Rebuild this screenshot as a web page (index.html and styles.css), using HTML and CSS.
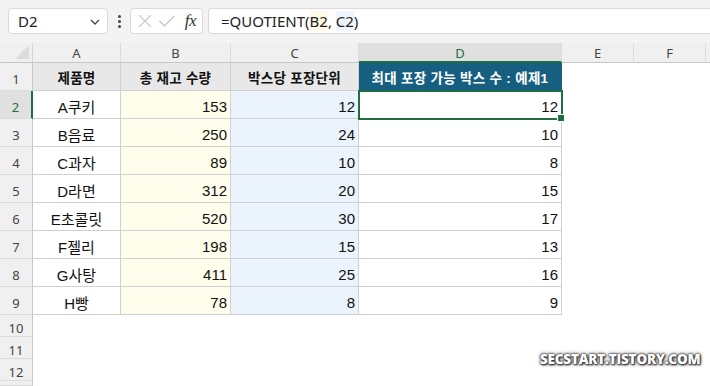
FILE: index.html
```html
<!DOCTYPE html>
<html lang="ko">
<head>
<meta charset="utf-8">
<link rel="stylesheet" href="styles.css">
</head>
<body>
<div class="app">
  <div class="toolbar">
    <div class="namebox"><span>D2</span>
      <svg class="chev" width="10" height="6" viewBox="0 0 10 6"><path d="M1 1l4 4 4-4" fill="none" stroke="#444" stroke-width="1.3"/></svg>
    </div>
    <div class="dots"><i></i><i></i><i></i></div>
    <div class="fxbox">
      <svg width="16" height="16" viewBox="0 0 16 16"><path d="M2 2l12 12M14 2L2 14" stroke="#c4c4c4" stroke-width="1.2" fill="none"/></svg>
      <svg width="18" height="16" viewBox="0 0 18 16"><path d="M1.5 8l5 5L16.5 3" stroke="#c4c4c4" stroke-width="1.2" fill="none"/></svg>
      <span class="fx">fx</span>
    </div>
    <div class="formula"><span class="ftext">=QUOTIENT(<span class="refb">B2</span>, <span class="refc">C2</span>)</span></div>
  </div>
  <div class="sheet">
    <div class="corner"><svg width="14" height="14" viewBox="0 0 14 14"><path d="M14 0V14H0Z" fill="#dcdcdc"/></svg></div>
    <div class="ch">A</div><div class="ch">B</div><div class="ch">C</div><div class="ch active">D</div><div class="ch">E</div><div class="ch">F</div><div class="ch last"></div>

    <div class="rh">1</div>
    <div class="c hd">제품명</div><div class="c hd">총 재고 수량</div><div class="c hd">박스당 포장단위</div><div class="c hd dark">최대 포장 가능 박스 수 : 예제1</div><div class="e"></div><div class="e"></div><div class="e"></div>

    <div class="rh active">2</div>
    <div class="c ctr">A쿠키</div><div class="c yel num">153</div><div class="c blu num">12</div><div class="c num sel">12<span class="handle"></span></div><div class="e"></div><div class="e"></div><div class="e"></div>

    <div class="rh">3</div>
    <div class="c ctr">B음료</div><div class="c yel num">250</div><div class="c blu num">24</div><div class="c num">10</div><div class="e"></div><div class="e"></div><div class="e"></div>

    <div class="rh">4</div>
    <div class="c ctr">C과자</div><div class="c yel num">89</div><div class="c blu num">10</div><div class="c num">8</div><div class="e"></div><div class="e"></div><div class="e"></div>

    <div class="rh">5</div>
    <div class="c ctr">D라면</div><div class="c yel num">312</div><div class="c blu num">20</div><div class="c num">15</div><div class="e"></div><div class="e"></div><div class="e"></div>

    <div class="rh">6</div>
    <div class="c ctr">E초콜릿</div><div class="c yel num">520</div><div class="c blu num">30</div><div class="c num">17</div><div class="e"></div><div class="e"></div><div class="e"></div>

    <div class="rh">7</div>
    <div class="c ctr">F젤리</div><div class="c yel num">198</div><div class="c blu num">15</div><div class="c num">13</div><div class="e"></div><div class="e"></div><div class="e"></div>

    <div class="rh">8</div>
    <div class="c ctr">G사탕</div><div class="c yel num">411</div><div class="c blu num">25</div><div class="c num">16</div><div class="e"></div><div class="e"></div><div class="e"></div>

    <div class="rh">9</div>
    <div class="c ctr">H빵</div><div class="c yel num">78</div><div class="c blu num">8</div><div class="c num">9</div><div class="e"></div><div class="e"></div><div class="e"></div>

    <div class="rh">10</div><div class="e wide"></div>
    <div class="rh">11</div><div class="e wide"></div>
    <div class="rh">12</div><div class="e wide"></div>
    <div class="rh"></div><div class="e wide"></div>
  </div>
  <div class="watermark">SECSTART.TISTORY.COM</div>
</div>
</body>
</html>
```
FILE: styles.css
```css
* { box-sizing: border-box; }
html, body { margin: 0; padding: 0; }
body {
  width: 710px; height: 386px; overflow: hidden; background: #fff;
  font-family: "Liberation Sans", "Noto Sans CJK KR", sans-serif;
}
.app { position: relative; width: 710px; height: 386px; }
.toolbar {
  height: 43px; background: #f3f3f3;
  display: flex; align-items: center; padding: 0 0 1px 8px; gap: 0;
}
.namebox {
  width: 100px; height: 26px; background: #fff; border: 1px solid #dadada; border-radius: 4px;
  display: flex; align-items: center; justify-content: space-between; padding: 0 7px 0 9px;
  font-family: "Noto Sans", sans-serif; font-size: 15px; color: #222;
}
.chev { margin-top: 1px; }
.dots { width: 22px; display: flex; flex-direction: column; align-items: center; gap: 2px; }
.dots i { display: block; width: 3px; height: 3px; background: #444; border-radius: 50%; }
.fxbox {
  width: 73px; height: 26px; background: #fff; border: 1px solid #dadada; border-radius: 4px;
  display: flex; align-items: center; padding: 0 6px 0 6px; gap: 5px;
}
.fx { font-family: "Liberation Serif", serif; font-style: italic; font-size: 17px; color: #333; margin-left: 4px; letter-spacing: -0.5px; }
.formula {
  margin-left: 5px; flex: 1; height: 26px; background: #fff; border: 1px solid #dadada; border-right: none;
  border-radius: 4px 0 0 4px; padding: 0 0 0 12px; display: flex; align-items: center;
  font-family: "Noto Sans", sans-serif; font-size: 15px; color: #222;
}
.ftext { white-space: pre; }
.refb { background: #fffbe8; }
.refc { background: #eef5fd; }

.sheet {
  display: grid;
  grid-template-columns: 33px 88px 110px 128px 203px 72px 72px 1fr;
  grid-template-rows: 20px repeat(9, 28px) repeat(3, 22px) 1fr;
  height: 343px;
}
.corner { background: #f0f0f0; border-right: 1px solid #d4d4d4; border-bottom: 1px solid #c6c6c6; display: flex; align-items: flex-end; justify-content: flex-end; padding: 0 3px 3px 0; }
.ch {
  background: #f0f0f0; border-right: 1px solid #dcdcdc; border-bottom: 1px solid #c6c6c6;
  display: flex; align-items: center; justify-content: center;
  font-family: "Noto Sans", sans-serif; font-size: 13px; color: #444; padding-top: 1px;
}
.ch.last { border-right: none; }
.ch.active { background: #e0e0e0; color: #1e6e42; border-bottom: 2px solid #1e6e42; }
.rh {
  background: #f0f0f0; border-right: 1px solid #c6c6c6; border-bottom: 1px solid #dcdcdc;
  display: flex; align-items: center; justify-content: center;
  font-family: "Noto Sans", sans-serif; font-size: 13px; color: #444; padding-top: 4px;
}
.rh.active { background: #e0e0e0; color: #1e6e42; border-right: 2px solid #1e6e42; }
.c {
  border-right: 1px solid #d0d0d0; border-bottom: 1px solid #d0d0d0;
  display: flex; align-items: center; font-size: 15px; color: #111; padding-top: 3px;
  position: relative;
}
.ctr { justify-content: center; }
.num { justify-content: flex-end; padding-right: 3px; }
.hd { justify-content: center; font-weight: bold; font-size: 13.5px; background: #e8e8e8; color: #111; letter-spacing: 0.3px; padding-top: 1px; }
.hd.dark { background: #165f80; color: #fff; border-right-color: #165f80; }
.yel { background: #fffdeb; }
.blu { background: #ebf3fc; }
.sel { outline: 2px solid #1e6e42; outline-offset: -1px; z-index: 1; }
.handle { position: absolute; right: -4px; bottom: -4px; width: 6px; height: 6px; background: #1e6e42; border: 1px solid #fff; box-sizing: content-box; }
.e { background: #fff; }
.wide { grid-column: 2 / -1; }
.watermark {
  position: absolute; left: 540px; top: 350px;
  font-family: "Open Sans", "Liberation Sans", sans-serif; font-weight: 800; font-size: 13.5px; color: #fff;
  letter-spacing: -0.2px;
  text-shadow: 0 0 2px #333, 0 0 2px #333, 1px 1px 2px #222, 0 0 4px #666;
}
```
